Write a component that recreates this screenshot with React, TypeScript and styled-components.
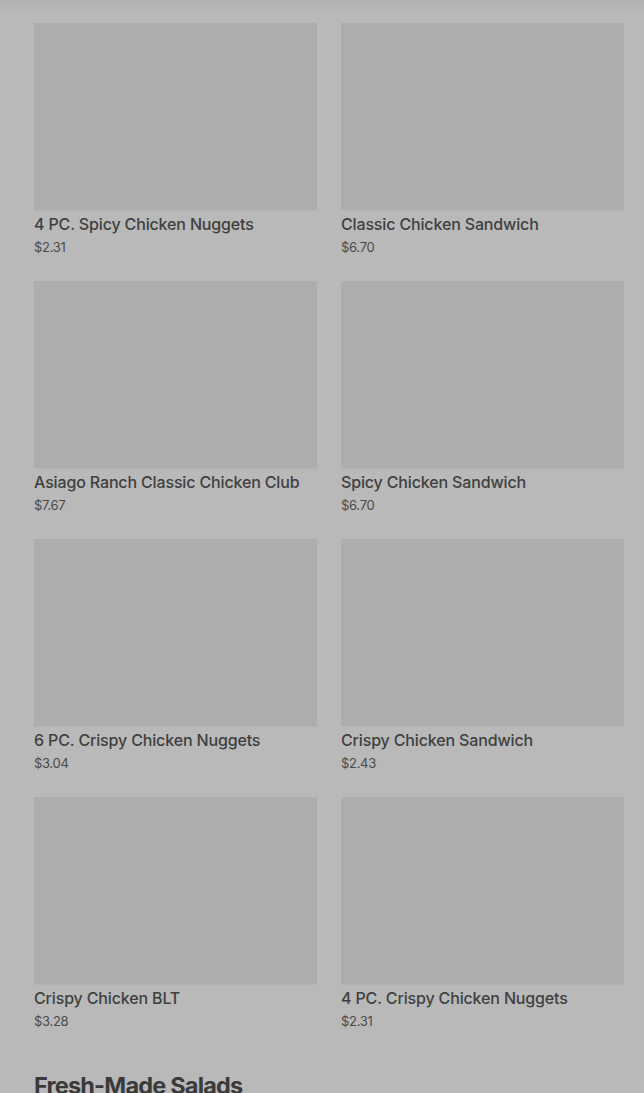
import React from "react";
import styled, { createGlobalStyle } from "styled-components";

const Global = createGlobalStyle`
  html, body { margin: 0; padding: 0; background: #b9b9b9; }
  body { font-family: Inter, "Noto Sans", sans-serif; }
`;

const Page = styled.div`
  min-height: 1093px;
  background: linear-gradient(to bottom, #b3b3b3 0px, #b9b9b9 14px);
  padding: 23px 20px 0 34px;
  box-sizing: border-box;
`;

const Grid = styled.div`
  display: grid;
  grid-template-columns: 283px 283px;
  column-gap: 24px;
  row-gap: 25px;
`;

const Card = styled.div`
  display: flex;
  flex-direction: column;
`;

const Thumb = styled.div`
  height: 187px;
  background: #adadad;
  border-bottom: 1px solid #b3b3b3;
`;

const Title = styled.div`
  margin-top: 1px;
  font-size: 16px;
  line-height: 24px;
  font-weight: 500;
  color: #404040;
  letter-spacing: -0.15px;
  white-space: nowrap;
`;

const Price = styled.div`
  margin-top: 2px;
  font-size: 13px;
  line-height: 18px;
  color: #4a4a4a;
  letter-spacing: -0.3px;
`;

const Section = styled.h2`
  margin: 41px 0 0;
  font-size: 23.5px;
  line-height: 30px;
  font-weight: 700;
  color: #3a3a3a;
  letter-spacing: -0.8px;
`;

const items = [
  ["4 PC. Spicy Chicken Nuggets", "$2.31"],
  ["Classic Chicken Sandwich", "$6.70"],
  ["Asiago Ranch Classic Chicken Club", "$7.67"],
  ["Spicy Chicken Sandwich", "$6.70"],
  ["6 PC. Crispy Chicken Nuggets", "$3.04"],
  ["Crispy Chicken Sandwich", "$2.43"],
  ["Crispy Chicken BLT", "$3.28"],
  ["4 PC. Crispy Chicken Nuggets", "$2.31"],
];

export default function App() {
  return (
    <>
      <Global />
      <Page>
        <Grid>
          {items.map(([name, price]) => (
            <Card key={name}>
              <Thumb />
              <Title>{name}</Title>
              <Price>{price}</Price>
            </Card>
          ))}
        </Grid>
        <Section>Fresh-Made Salads</Section>
      </Page>
    </>
  );
}
